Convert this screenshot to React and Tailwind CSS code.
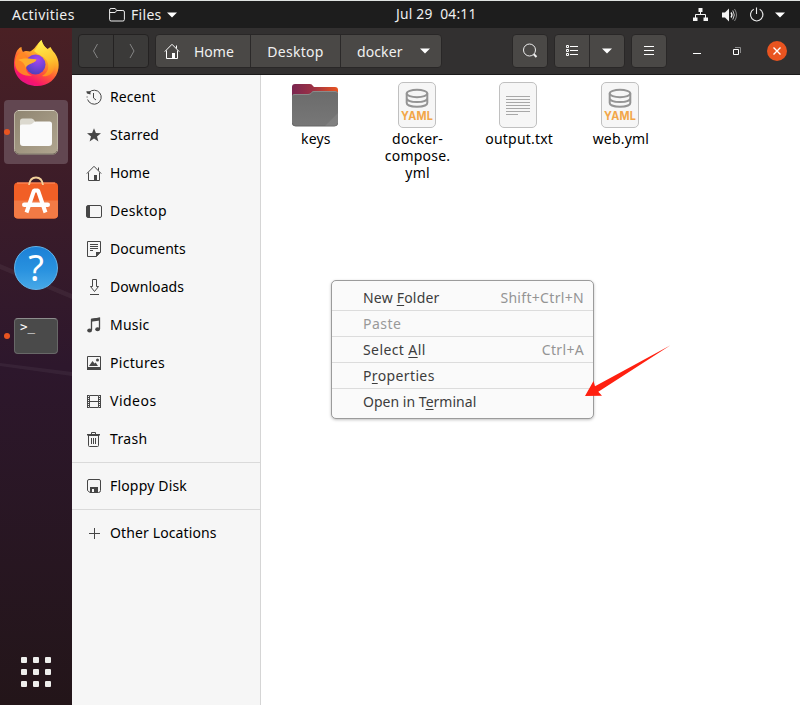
import React from "react";

const ink = "#464646";

function Svg({ w = 16, h = 16, children, className = "" }) {
  return (
    <svg width={w} height={h} viewBox={`0 0 ${w} ${h}`} fill="none" className={`block shrink-0 ${className}`}>
      {children}
    </svg>
  );
}

function HomeIcon({ color = ink }) {
  return (
    <Svg>
      <path d="M.8 8.6 8 1.3l7.2 7.3M2.5 7.5v8h11v-8M12.5 2.5v3" stroke={color} />
      <path d="M8 10h3v5.5H8z" fill={color} />
    </Svg>
  );
}

const icons = {
  recent: (
    <Svg>
      <path d="M3.2 3.3A7 7 0 1 1 1.6 10.500" stroke={ink} />
      <path d="M1.100 8.500v-1" stroke={ink} />
      <path d="M.3 2.2h4.200v3.200L1 4.600z" fill={ink} />
      <path d="M7.500 4v5L10 11" stroke={ink} />
    </Svg>
  ),
  star: (
    <Svg>
      <path d="m8 1.200 1.900 4.900 5.100.2-4 3.200 1.400 5L8 11.600l-4.400 2.900 1.400-5L1 6.300l5.100-.2z" fill={ink} />
    </Svg>
  ),
  home: <HomeIcon />,
  desktop: (
    <Svg>
      <rect x=".5" y="2.500" width="15" height="12" rx="1.500" stroke={ink} />
      <path d="M1 3h3v11H1z" fill={ink} />
    </Svg>
  ),
  documents: (
    <Svg>
      <path d="M1.500.5h13v10.500l-4 4.500h-9z" stroke={ink} />
      <path d="M4 3.500h8M4 5.500h8M4 7.500h8M4 9.500h3" stroke={ink} />
      <path d="M10 11h5l-5 5z" fill={ink} />
    </Svg>
  ),
  downloads: (
    <Svg>
      <path d="M6.500.5h4v7h2l-4 5-4-5h2zM4 15.500h9" stroke={ink} />
    </Svg>
  ),
  music: (
    <Svg>
      <path d="M5.500 13V2.500L13.500 1.300V12" stroke={ink} strokeWidth="1.300" />
      <path d="M5 1.800 14 .5v3L5 4.800z" fill={ink} />
      <ellipse cx="3.600" cy="13.400" rx="2.400" ry="2" fill={ink} />
      <ellipse cx="11.600" cy="12.300" rx="2.400" ry="2" fill={ink} />
    </Svg>
  ),
  pictures: (
    <Svg>
      <path d="M1.500 1.500h13v13h-13z" stroke={ink} />
      <path d="M1 12h14v3H1zM3 11l3.500-5 2 2.500 1.200-1 2.300 3.500z" fill={ink} />
      <circle cx="11.500" cy="5" r="1.500" fill={ink} />
    </Svg>
  ),
  videos: (
    <Svg>
      <path d="M3.500 2.500h9v12h-9zM3.500 8.500h9" stroke={ink} />
      <path d="M1.500 2v13M14.500 2v13" stroke={ink} />
      <path d="M2.500 2v13M13.500 2v13" stroke={ink} strokeDasharray="1 1" />
    </Svg>
  ),
  trash: (
    <Svg>
      <path d="M5.500 3V1.500h4V3" stroke={ink} />
      <path d="M1 3h13v1.500H1zM2 4h11v1H2z" fill={ink} />
      <path d="M2.500 5v9.500q0 1 1 1h8q1 0 1-1V5M5.500 7v6M7.500 7v6M9.500 7v6" stroke={ink} />
    </Svg>
  ),
  floppy: (
    <Svg>
      <path d="M3 1.500h10q1.500 0 1.500 1.500v9.500q0 2-2 2H4l-2.500-2V3Q1.500 1.500 3 1.500z" stroke={ink} />
      <path d="M4 9h8v5H4z" fill={ink} />
      <path d="M6 11h2v3H6z" fill="#f6f6f6" />
    </Svg>
  ),
  plus: (
    <Svg>
      <path d="M3 8.500h11M8.500 3v11" stroke={ink} />
    </Svg>
  ),
};

function Row({ icon, label, track = "tracking-[0.1px]" }) {
  return (
    <div className="flex h-[38px] items-center gap-2 pl-[14px]">
      {icons[icon]}
      <span className={`whitespace-nowrap leading-[20px] text-black ${track}`}>{label}</span>
    </div>
  );
}

function Triangle() {
  return (
    <Svg w={10} h={6}>
      <path d="M0 .5h10L5 5.500z" fill="#fff" />
    </Svg>
  );
}

function TopBar() {
  return (
    <header className="flex h-7 shrink-0 items-center border-t border-[#dfe3e1] bg-[#1d1d1d] text-[#f0f0f0]">
      <span className="w-[97px] whitespace-nowrap pl-3 tracking-[0.45px]">Activities</span>
      <div className="flex w-[299px] items-center pl-3">
        <Svg>
          <path d="M.6 3q0-1.500 1.500-1.500h4.100l1.500 2h6.200q1.500 0 1.500 1.500v7.500q0 1.500-1.500 1.500H2.100q-1.500 0-1.500-1.500zM.6 5.500h5.600l1.500-2" stroke="#eee" />
        </Svg>
        <span className="w-[42px] pl-[6px] tracking-[0.3px]">Files</span>
        <Triangle />
      </div>
      <span className="w-[297px] whitespace-pre text-[13.800px] tracking-[0.220px]">{"Jul 29  04:11"}</span>
      <div className="flex items-center">
        <Svg>
          <path d="M5.500 0h4v4h-4zM0 9.500h4.500V13H0zM10.500 9.500H15V13h-4.500z" fill="#f4f4f4" transform="translate(0 1)" />
          <path d="M7.500 4.500v3M2.500 11V7.500h10V11" stroke="#f4f4f4" />
        </Svg>
        <Svg className="ml-[13px]">
          <path d="M0 5.500h3l4-4v13l-4-4H0z" fill="#f4f4f4" />
          <path d="M9 5.500q2 2.500 0 5" stroke="#f4f4f4" strokeWidth="1.300" />
          <path d="M10.800 3.500q3 4.500 0 9" stroke="#ccc" />
          <path d="M12.500 2q4 6 0 12" stroke="#888" />
        </Svg>
        <Svg className="ml-[11px]">
          <path d="M4.700 2.300a6.200 6.200 0 1 0 6 0M7.500.5v6.500" stroke="#eee" strokeWidth="1.100" />
        </Svg>
        <div className="ml-[10px]"><Triangle /></div>
      </div>
    </header>
  );
}

const btn = "flex items-center justify-center rounded-[4px] border border-[#292727] bg-[#4a4846]";

function HeaderBar() {
  return (
    <div className="flex h-[47px] shrink-0 items-center border-b border-[#1b1a1a] bg-[#323030] pl-[6px] text-[#f0f0f0]">
      <div className="flex h-[34px] w-[71px] rounded-[4px] border border-[#242222] bg-[#3b3a39]">
        <div className="flex w-[35px] items-center justify-center border-r border-[#242222]">
          <Svg><path d="M9.500 1 5.500 8l4 7" stroke="#858585" /></Svg>
        </div>
        <div className="flex flex-1 items-center justify-center">
          <Svg><path d="m7 1 4 7-4 7" stroke="#858585" /></Svg>
        </div>
      </div>
      <div className="ml-[6px] flex h-[34px] w-[287px] rounded-[4px] border border-[#292727] bg-[#4a4846]">
        <div className="flex w-[95px] items-center border-r border-[#2b2929] pl-2">
          <HomeIcon color="#fff" />
          <span className="ml-[14px]">Home</span>
        </div>
        <div className="flex w-[90px] items-center justify-center border-r border-[#2b2929] tracking-[0.3px]">Desktop</div>
        <div className="flex flex-1 items-center pl-4">
          <span className="w-[63px] tracking-[0.1px]">docker</span>
          <Triangle />
        </div>
      </div>
      <div className={`${btn} ml-[70px] h-[34px] w-[36px]`}>
        <Svg>
          <circle cx="7.500" cy="7" r="6" stroke="#eee" />
          <path d="m11.800 11.300 2.700 2.700" stroke="#eee" strokeWidth="2" />
        </Svg>
      </div>
      <div className="ml-[6px] flex h-[34px] w-[71px] rounded-[4px] border border-[#292727] bg-[#4a4846]">
        <div className="flex w-[35px] items-center justify-center border-r border-[#2b2929]">
          <Svg w={14} h={14}>
            <path d="M1.500 1.500h2v2h-2zM1.500 5.500h2v2h-2zM1.500 9.500h2v2h-2zM5 2.500h8M5 6.500h8M5 10.500h8" stroke="#fff" />
          </Svg>
        </div>
        <div className="flex flex-1 items-center justify-center"><Triangle /></div>
      </div>
      <div className={`${btn} ml-[6px] h-[34px] w-[36px]`}>
        <Svg w={10} h={10}><path d="M0 .5h10M0 4.500h10M0 8.500h10" stroke="#fff" /></Svg>
      </div>
      <Svg className="ml-[22px]"><path d="M4 10.500h8" stroke="#fff" /></Svg>
      <Svg className="ml-[24px]">
        <path d="M4.500 6.500h5v5h-5z" stroke="#fff" />
        <path d="M6 4.500h5.500V10" stroke="#8a8a8a" />
      </Svg>
      <div className="ml-[22px] flex h-5 w-5 items-center justify-center rounded-full bg-[#e95420]">
        <Svg w={8} h={8}><path d="m.5.5 7 7m0-7-7 7" stroke="#fff" strokeWidth="1.400" /></Svg>
      </div>
    </div>
  );
}

function Firefox() {
  return (
    <svg width="48" height="48" viewBox="0 0 48 48" className="block">
      <defs>
        <linearGradient id="ffBody" x1=".8" y1="0" x2=".25" y2="1">
          <stop offset="0" stopColor="#fff44f" />
          <stop offset=".35" stopColor="#ffae29" />
          <stop offset=".6" stopColor="#ff5a36" />
          <stop offset=".85" stopColor="#f7156c" />
          <stop offset="1" stopColor="#e0128d" />
        </linearGradient>
        <linearGradient id="ffFlame" x1=".4" y1="0" x2=".6" y2="1">
          <stop offset="0" stopColor="#fff251" />
          <stop offset=".6" stopColor="#ffc52f" />
          <stop offset="1" stopColor="#ff8a1f" />
        </linearGradient>
        <radialGradient id="ffGlobe" cx=".6" cy=".25" r=".8">
          <stop offset="0" stopColor="#a646f0" />
          <stop offset=".5" stopColor="#7643d8" />
          <stop offset="1" stopColor="#4a3fb5" />
        </radialGradient>
      </defs>
      <path d="M4 14C5 11 8 8 9.500 8c0 2 .5 3.500 1.500 5 2-1.500 5-1 7-.5 5-2 7-8 11.500-11.500 1 4 3 7 6 9l3-2c1 3 4 5 6 9 2 4 2.500 8 2 12C45 40 36 47 25 47 12 47 2.500 38 2 27c-.2-5 .5-9 2-13z" fill="url(#ffBody)" />
      <path d="M29.500 1c1 5 4 8 8 11 5 4 7 11 4.500 18-2 6-7 8-12 7 6-3 8-9 5-15-3-5-10-7-13-10 3-2 4-8 7.500-11z" fill="url(#ffFlame)" />
      <circle cx="23.500" cy="25.500" r="10" fill="url(#ffGlobe)" />
      <path d="M3 24c0-6 3-11 9-10.500 1 3 2 5 4 6.200l8.500.8c-.5 2.500-3.500 3-5.500 4-3 1.500-5 2-5 4.500 0 4 3 6.500 6 7.500C10 38 3 32 3 24z" fill="#ff8a22" opacity=".9" />
      <path d="M6 21c4-2 10-2 18.500-.5-.5 2.500-3.500 3-5.500 4-3 1.500-5 2-5 4.500-2-5-4-7-8-8z" fill="#ffb92e" opacity=".8" />
    </svg>
  );
}

function FilesApp() {
  return (
    <svg width="44" height="45" viewBox="0 0 44 45" className="block">
      <defs>
        <linearGradient id="fa" x1="0" y1="0" x2="1" y2="1">
          <stop offset="0" stopColor="#8f8571" />
          <stop offset="1" stopColor="#b0a58f" />
        </linearGradient>
      </defs>
      <rect x=".5" y=".5" width="43" height="43.500" rx="4.500" fill="url(#fa)" stroke="#bcb4a3" />
      <path d="M4 .5h36" stroke="#ddd7ca" />
      <path d="M1 41q1 3 4 3h34q3 0 4-3" fill="none" stroke="#746c5e" />
      <path d="M6 12V11q0-2.500 2.500-2.500h9q1.500 0 2.500 1.500l2 3-4 5H6z" fill="#dcd9cf" />
      <path d="M6 16q0-1.500 2-1.500h8c3 0 3-3 6-3h13.500Q38 11.500 38 14v19q0 3-3 3H9q-3 0-3-3z" fill="#fafafa" />
    </svg>
  );
}

function SoftwareApp() {
  return (
    <svg width="46" height="44" viewBox="0 0 46 44" className="block">
      <rect x="1" y="6.500" width="44" height="36" rx="4" fill="#f15f26" />
      <path d="M1 24.500h44v14q0 4-4 4H5q-4 0-4-4z" fill="#f27a45" />
      <path d="M4 7h38" stroke="#ff9568" />
      <path d="M16 9q1-7.500 7-7.500t7 7.500" fill="none" stroke="#f3d19b" strokeWidth="1.800" />
      <path d="m13.500 36.500 7.500-22h4L32.500 36.500" fill="none" stroke="#fff" strokeWidth="4" strokeLinejoin="bevel" />
      <rect x="9" y="26.500" width="28" height="4.500" rx="2.250" fill="#fff" />
    </svg>
  );
}

function HelpApp() {
  return (
    <div className="flex h-11 w-11 items-center justify-center rounded-full border border-[#62b5eb] bg-linear-to-b from-[#1c80d6] from-0% via-[#2992df] via-55% to-[#46a8e7] font-['Noto_Sans',sans-serif] text-[36px] leading-[42px] text-white">
      ?
    </div>
  );
}

function TerminalApp() {
  return (
    <div className="h-9 w-11 rounded-[4px] border border-[#686868] border-t-[#8d8d8d] bg-[#4a4a4a] pl-[5px] font-['DejaVu_Sans_Mono',monospace] text-[12.5px] leading-[16px] text-white">
      {">_"}
    </div>
  );
}

function Dock() {
  return (
    <nav className="relative flex w-[72px] shrink-0 flex-col items-center overflow-hidden bg-linear-to-b from-[#4a2024] from-0% via-[#2d172c] via-50% to-[#231519] to-100%">
      <svg width="72" height="677" viewBox="0 0 72 677" className="absolute left-0 top-0">
        <path d="M0 236 72 266v5L0 241zM0 335l72 9v4L0 338z" fill="#fff" opacity=".05" />
      </svg>
      <div className="relative mt-[11px]"><Firefox /></div>
      <div className="relative mt-[13px] flex h-16 w-16 items-center justify-center rounded-[4px] bg-[#624751]"><FilesApp /></div>
      <div className="relative mt-[12px]"><SoftwareApp /></div>
      <div className="relative mt-[26px]"><HelpApp /></div>
      <div className="relative mt-[28px]"><TerminalApp /></div>
      <div className="relative mb-[18px] mt-auto grid grid-cols-3 gap-[6px]">
        {Array.from({ length: 9 }, (_, i) => (
          <span key={i} className="h-[6px] w-[6px] rounded-[1px] bg-[#eeeeec]" />
        ))}
      </div>
      <span className="absolute left-1 top-[101px] h-[6px] w-[6px] rounded-full bg-[#e95420]" />
      <span className="absolute left-1 top-[305px] h-[6px] w-[6px] rounded-full bg-[#e95420]" />
    </nav>
  );
}

function FolderPic() {
  return (
    <Svg w={48} h={48}>
      <defs>
        <linearGradient id="fold" x1="0" y1="0" x2="1" y2="0">
          <stop offset="0" stopColor="#7a2650" />
          <stop offset=".45" stopColor="#9c3145" />
          <stop offset="1" stopColor="#e95420" />
        </linearGradient>
        <linearGradient id="foldFront" x1="0" y1="0" x2="0" y2="1">
          <stop offset="0" stopColor="#6b6b6b" />
          <stop offset="1" stopColor="#777" />
        </linearGradient>
      </defs>
      <path d="M1 6q0-3 3-3h15q2 0 3 2l1 1h21q3 0 3 3v12H1z" fill="url(#fold)" />
      <path d="M1 15q0-2 3-2h13c4 0 3-3 6-3h21q3 0 3 3v29q0 3-3 3H4q-3 0-3-3z" fill="url(#foldFront)" />
      <path d="M1.500 42q0 3 3 3h39q3 0 3-3" stroke="#666" />
      <path d="M2 14q1-.5 2-.5h13c4 0 3-3 6-3h21q2 0 2.500 1.500" stroke="#8a8a8a" />
      <path d="M34 45 47 32v10q0 3-3 3z" fill="#fff" opacity=".08" />
    </Svg>
  );
}

function Page({ children }) {
  return (
    <Svg w={40} h={48}>
      <rect x="1.500" y="1.500" width="37" height="45" rx="4.500" fill="#f6f6f6" stroke="#c0c0c0" />
      {children}
    </Svg>
  );
}

function YamlPic() {
  return (
    <Page>
      <g stroke="#949494" strokeWidth="2">
        <ellipse cx="20" cy="12.500" rx="10.300" ry="3.700" />
        <path d="M9.700 12.500v9.500c0 5 20.600 5 20.600 0v-9.500M9.700 17.300c0 5 20.600 5 20.600 0" />
      </g>
      <text x="4" y="39" fontSize="11.500" fontWeight="700" textLength="32" lengthAdjust="spacingAndGlyphs" fill="#f2a649" className="font-[Inter,sans-serif]">YAML</text>
    </Page>
  );
}

function TextPic() {
  return (
    <Page>
      <path d="M8 15.500h24M8 18.500h24M8 21.500h24M8 24.500h24M8 27.500h24M8 30.500h24M8 33.500h12" stroke="#a8a8a8" />
    </Page>
  );
}

function File({ pic, label }) {
  return (
    <div className="flex w-[101.700px] flex-col items-center text-center leading-[17px] tracking-[0.2px] text-black">
      {pic}
      <div className="ml-[2px] mt-[1px] whitespace-pre-line">{label}</div>
    </div>
  );
}

function Key({ children }) {
  return <span className="underline decoration-1 underline-offset-[2px] [text-decoration-skip-ink:none]">{children}</span>;
}

function MenuItem({ children, keys, muted, last, track = "tracking-[0.2px]" }) {
  return (
    <div className={`flex items-center justify-between whitespace-nowrap pl-[31px] pr-[9px] ${last ? "h-[25px]" : "h-[26px] border-b border-[#dcdcdc]"} ${muted ? "text-[#999]" : "text-[#3d3d3d]"}`}>
      <span className={track}>{children}</span>
      <span className="tracking-[0.32px] text-[#949494]">{keys}</span>
    </div>
  );
}

function ContextMenu() {
  return (
    <div className="absolute left-[331px] top-[280px] h-[139px] w-[263px] rounded-[5px] border border-[#9b9b9b] bg-[#fafafa] pt-1 shadow-[0_1px_3px_rgba(0,0,0,0.25)]">
      <MenuItem keys="Shift+Ctrl+N">New <Key>F</Key>older</MenuItem>
      <MenuItem muted track="tracking-[0.45px]">Paste</MenuItem>
      <MenuItem keys="Ctrl+A" track="tracking-[0.4px]">Select <Key>A</Key>ll</MenuItem>
      <MenuItem track="tracking-[0.37px]">P<Key>r</Key>operties</MenuItem>
      <MenuItem last track="tracking-[0.02px]">Open in T<Key>e</Key>rminal</MenuItem>
    </div>
  );
}

export default function App() {
  return (
    <div className="relative flex h-[705px] w-[800px] flex-col overflow-hidden bg-white font-['Noto_Sans','Open_Sans',sans-serif] text-[14px]">
      <TopBar />
      <div className="flex min-h-0 flex-1">
        <Dock />
        <div className="flex min-w-0 flex-1 flex-col">
          <HeaderBar />
          <div className="flex min-h-0 flex-1">
            <aside className="w-[189px] shrink-0 border-r border-[#d5d5d5] bg-[#f6f6f6] pt-[3px]">
              <Row icon="recent" label="Recent" />
              <Row icon="star" label="Starred" />
              <Row icon="home" label="Home" track="tracking-normal" />
              <Row icon="desktop" label="Desktop" track="tracking-[0.35px]" />
              <Row icon="documents" label="Documents" track="tracking-[0.02px]" />
              <Row icon="downloads" label="Downloads" track="tracking-[0.08px]" />
              <Row icon="music" label="Music" track="tracking-[0.2px]" />
              <Row icon="pictures" label="Pictures" track="tracking-[0.3px]" />
              <Row icon="videos" label="Videos" track="tracking-[0.5px]" />
              <Row icon="trash" label="Trash" track="tracking-[0.35px]" />
              <div className="my-1 h-px bg-[#dadada]" />
              <Row icon="floppy" label="Floppy Disk" track="tracking-[0.17px]" />
              <div className="my-1 h-px bg-[#dadada]" />
              <Row icon="plus" label="Other Locations" track="tracking-[0.12px]" />
            </aside>
            <main className="flex flex-1 items-start bg-white pl-[3px] pt-[6px]">
              <File pic={<FolderPic />} label="keys" />
              <File pic={<YamlPic />} label={"docker-\ncompose.\nyml"} />
              <File pic={<TextPic />} label="output.txt" />
              <File pic={<YamlPic />} label="web.yml" />
            </main>
          </div>
        </div>
      </div>
      <ContextMenu />
      <svg width="90" height="55" viewBox="582 343 90 55" className="absolute left-[582px] top-[343px]">
        <path d="m585 396 8.500-15 1.500 5.300L670.500 345.200l-72.200 46.500 3.700 4z" fill="#ff2010" />
      </svg>
    </div>
  );
}
